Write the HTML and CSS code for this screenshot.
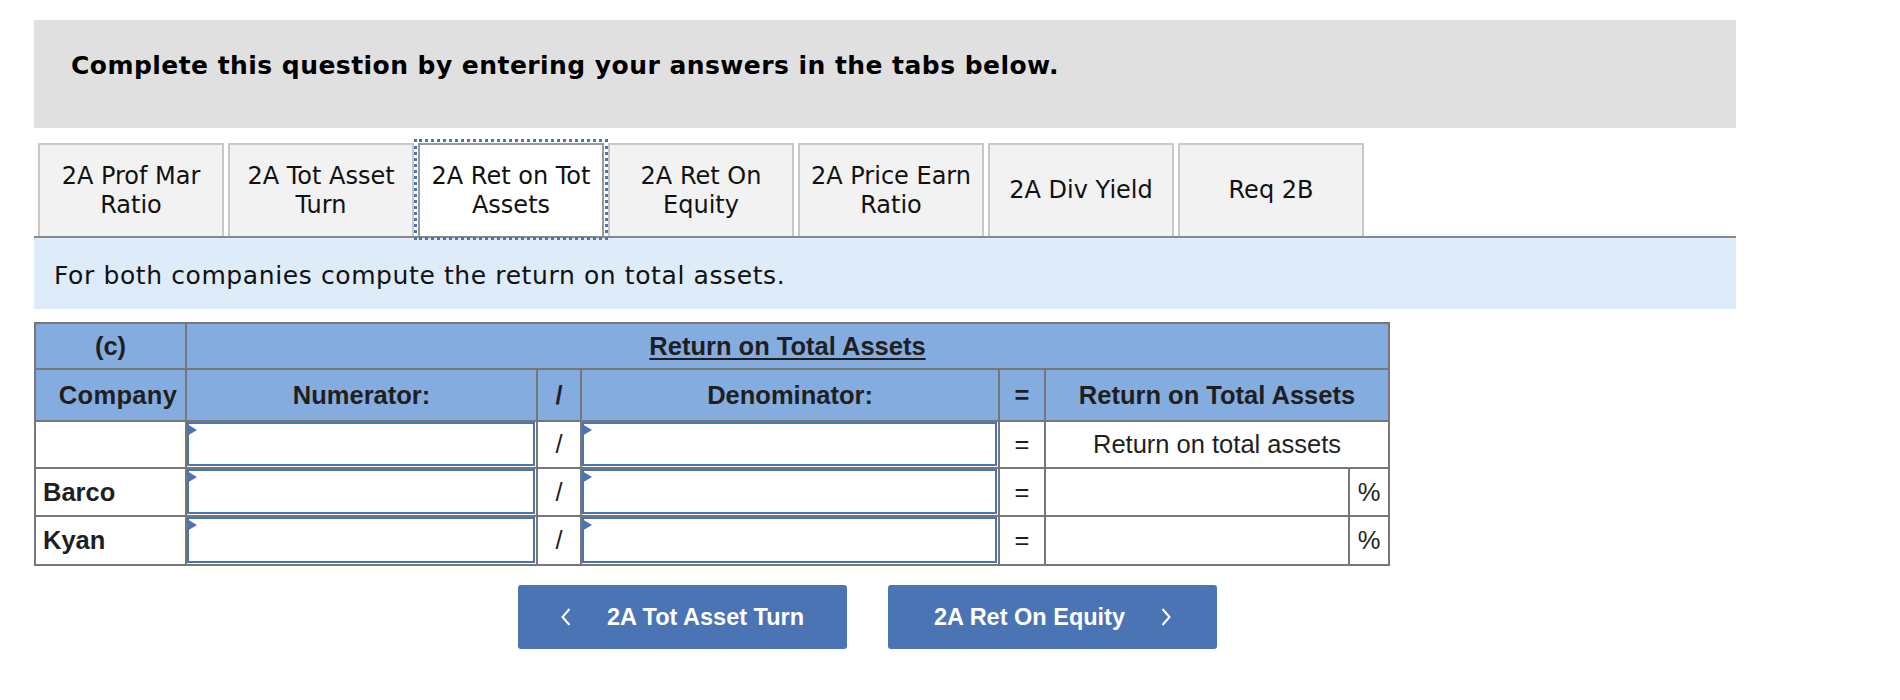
FILE: index.html
```html
<!DOCTYPE html>
<html lang="en">
<head>
<meta charset="utf-8">
<title>Return on Total Assets</title>
<link rel="stylesheet" href="styles.css">
</head>
<body>
<div class="page">
  <div class="prompt">Complete this question by entering your answers in the tabs below.</div>

  <div class="tabs">
    <div class="tab">2A Prof Mar<br>Ratio</div>
    <div class="tab">2A Tot Asset<br>Turn</div>
    <div class="tab active">2A Ret on Tot<br>Assets</div>
    <div class="tab">2A Ret On<br>Equity</div>
    <div class="tab">2A Price Earn<br>Ratio</div>
    <div class="tab">2A Div Yield</div>
    <div class="tab">Req 2B</div>
  </div>

  <div class="instruction">For both companies compute the return on total assets.</div>

  <div class="grid">
    <div class="cell head">(c)</div>
    <div class="cell head span-rest"><span class="title">Return on Total Assets</span></div>

    <div class="cell head company">Company</div>
    <div class="cell head">Numerator:</div>
    <div class="cell head">/</div>
    <div class="cell head">Denominator:</div>
    <div class="cell head">=</div>
    <div class="cell head span2">Return on Total Assets</div>

    <div class="cell"></div>
    <div class="cell input-cell"><div class="field"><input type="text"></div></div>
    <div class="cell">/</div>
    <div class="cell input-cell"><div class="field"><input type="text"></div></div>
    <div class="cell">=</div>
    <div class="cell span2">Return on total assets</div>

    <div class="cell name">Barco</div>
    <div class="cell input-cell"><div class="field"><input type="text"></div></div>
    <div class="cell">/</div>
    <div class="cell input-cell"><div class="field"><input type="text"></div></div>
    <div class="cell">=</div>
    <div class="cell"></div>
    <div class="cell">%</div>

    <div class="cell name">Kyan</div>
    <div class="cell input-cell"><div class="field"><input type="text"></div></div>
    <div class="cell">/</div>
    <div class="cell input-cell"><div class="field"><input type="text"></div></div>
    <div class="cell">=</div>
    <div class="cell"></div>
    <div class="cell">%</div>
  </div>

  <div class="nav">
    <div class="btn">
      <svg class="chev" width="10" height="18" viewBox="0 0 10 18"><polyline points="8.5,1 1.5,9 8.5,17" fill="none" stroke="#fff" stroke-width="2"/></svg>
      <span>2A Tot Asset Turn</span>
    </div>
    <div class="btn">
      <span>2A Ret On Equity</span>
      <svg class="chev" width="10" height="18" viewBox="0 0 10 18"><polyline points="1.5,1 8.5,9 1.5,17" fill="none" stroke="#fff" stroke-width="2"/></svg>
    </div>
  </div>
</div>
</body>
</html>
```

FILE: styles.css
```css
* { box-sizing: border-box; }

body {
  margin: 0;
  background: #fff;
  font-family: "DejaVu Sans", Verdana, sans-serif;
  color: #111;
}

.page {
  padding: 20px 0 0 34px;
}

.prompt {
  width: 1702px;
  background: #e0e0e0;
  padding: 32px 37px 48px;
  font-size: 25px;
  letter-spacing: 0.45px;
  font-weight: bold;
  line-height: 28px;
  color: #000;
}

.tabs {
  width: 1702px;
  margin-top: 15px;
  padding-left: 4px;
  display: flex;
  gap: 4px;
  border-bottom: 2px solid #8a8a8a;
}

.tab {
  width: 186px;
  height: 93px;
  background: #f2f2f2;
  border: 2px solid #c8c8c8;
  border-bottom: none;
  display: flex;
  align-items: center;
  justify-content: center;
  text-align: center;
  font-size: 24px;
  line-height: 29px;
  color: #111;
}

.tab.active {
  background: #fff;
  border-color: #9a9a9a;
  outline: 3px dotted #4a74b4;
  outline-offset: 1px;
}

.instruction {
  width: 1702px;
  background: #deebf8;
  padding: 24px 0 19px 20px;
  font-size: 25px;
  letter-spacing: 0.6px;
  line-height: 28px;
  color: #111;
}

.grid {
  margin-top: 13px;
  display: grid;
  grid-template-columns: 149px 349px 42px 416px 44px 302px 38px;
  grid-template-rows: 44px 50px 45px 46px 47px;
  gap: 2px;
  padding: 2px;
  width: max-content;
  background: #777;
  font-family: "Liberation Sans", Arial, Helvetica, sans-serif;
  font-size: 25.5px;
  color: #1f1f1f;
}

.cell {
  background: #fff;
  display: flex;
  align-items: center;
  justify-content: center;
  white-space: nowrap;
}

.cell.head {
  background: #85acdf;
  font-weight: bold;
}

.cell.company {
  padding-left: 15px;
  letter-spacing: 0.3px;
}

.span-rest { grid-column: 2 / -1; }
.span2 { grid-column: span 2; }

.title {
  text-decoration: underline;
  text-decoration-thickness: 2px;
  text-underline-offset: 3px;
}

.cell.name {
  justify-content: flex-start;
  padding-left: 7px;
  font-weight: bold;
}

.input-cell {
  padding: 0 1px 1px 0;
  align-items: stretch;
}

.field {
  position: relative;
  flex: 1;
}

.field input {
  display: block;
  width: 100%;
  height: 100%;
  margin: 0;
  border: 2px solid #4a74b4;
  background: #fff;
  outline: none;
  padding: 0 6px;
  font: inherit;
}

.field::before {
  content: "";
  position: absolute;
  left: 0;
  top: 2px;
  width: 0;
  height: 0;
  border-left: 10px solid #4a74b4;
  border-top: 6px solid transparent;
  border-bottom: 6px solid transparent;
}

.nav {
  display: flex;
  gap: 41px;
  margin: 19px 0 0 484px;
}

.btn {
  width: 329px;
  height: 64px;
  background: #4a74b4;
  border-radius: 3px;
  color: #fff;
  font-family: "Liberation Sans", Arial, Helvetica, sans-serif;
  font-weight: bold;
  font-size: 23.5px;
  display: flex;
  align-items: center;
  justify-content: center;
  gap: 36px;
}

.chev { display: block; }
```
